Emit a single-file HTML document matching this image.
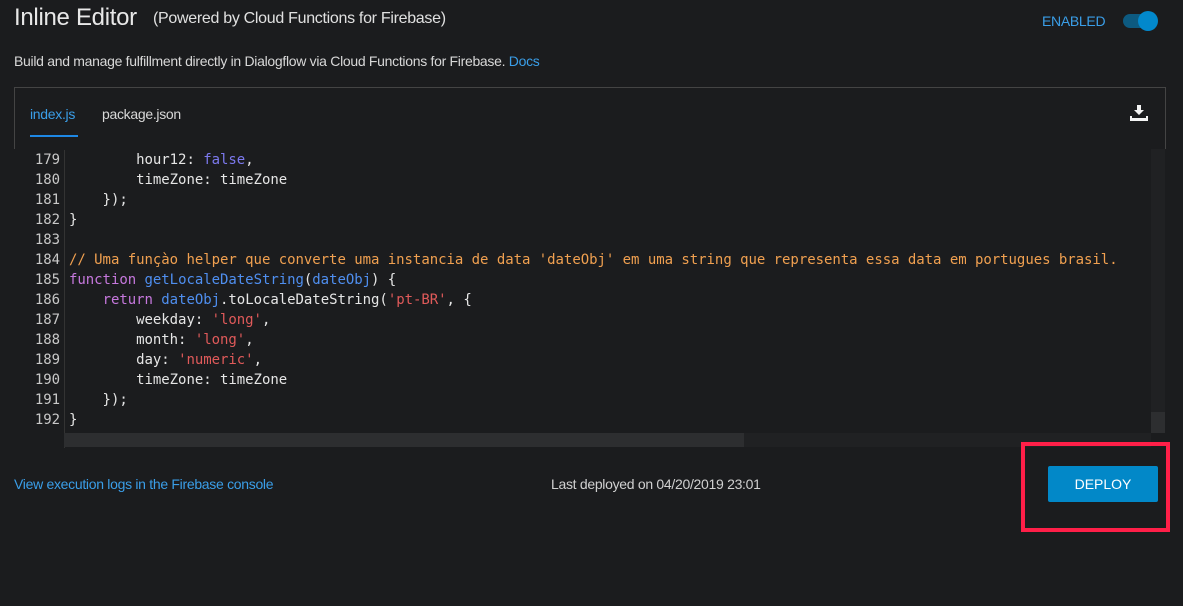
<!DOCTYPE html>
<html><head><meta charset="utf-8"><style>
*{margin:0;padding:0;box-sizing:border-box}
body{width:1183px;height:606px;background:#1b1c1e;font-family:"Liberation Sans",sans-serif;color:#ddd;position:relative;overflow:hidden}
.a{position:absolute;white-space:nowrap}
.n{letter-spacing:-0.3px}
.code{position:absolute;left:14px;top:150px;width:1151px;height:283px;font-family:"DejaVu Sans Mono",monospace;font-size:14px;line-height:20px;color:#e6e6e6;letter-spacing:-0.04px}
.ln{position:absolute;left:0;width:46px;text-align:right;color:#c8c8c8}
.tx{position:absolute;left:55px;white-space:pre}
.k{color:#c678dd}.f{color:#4f8ff0}.s{color:#e05a5a}.c{color:#f0a050}.b{color:#7c79ee}
</style></head><body>
<div class="a n" style="left:14px;top:4px;font-size:24px;color:#e8e8e8">Inline Editor</div>
<div class="a n" style="left:153px;top:10px;font-size:16px;color:#e0e0e0">(Powered by Cloud Functions for Firebase)</div>
<div class="a n" style="left:1042px;top:13px;font-size:14px;color:#3a9ee8">ENABLED</div>
<div class="a" style="left:1123px;top:14px;width:34px;height:14px;border-radius:7px;background:#0d5a80"></div>
<div class="a" style="left:1138px;top:11px;width:20px;height:20px;border-radius:10px;background:#0288cc"></div>
<div class="a n" style="left:14px;top:53px;font-size:14px;color:#d8d8d8">Build and manage fulfillment directly in Dialogflow via Cloud Functions for Firebase. <span style="color:#3a9ee8">Docs</span></div>
<div class="a" style="left:14px;top:87px;width:1152px;height:62px;border:1px solid #444;border-bottom:none"></div>
<div class="a n" style="left:30px;top:106px;font-size:14px;color:#3a9ee8">index.js</div>
<div class="a" style="left:30px;top:135px;width:48px;height:2px;background:#1e88e5"></div>
<div class="a n" style="left:102px;top:106px;font-size:14px;color:#d8d8d8">package.json</div>
<svg class="a" style="left:1130px;top:105px" width="18" height="16" viewBox="0 0 18 16"><path d="M7 0h4v5h3l-5 5-5-5h3z" fill="#f4f4f4"/><path d="M0 11h2v2h14v-2h2v5H0z" fill="#f4f4f4"/></svg>
<div class="code">
<div class="a" style="left:50px;top:0;width:1px;height:298px;background:#333"></div>
<div class="ln" style="top:0">179</div><div class="tx" style="top:0">        hour12: <span class="b">false</span>,</div>
<div class="ln" style="top:20px">180</div><div class="tx" style="top:20px">        timeZone: timeZone</div>
<div class="ln" style="top:40px">181</div><div class="tx" style="top:40px">    });</div>
<div class="ln" style="top:60px">182</div><div class="tx" style="top:60px">}</div>
<div class="ln" style="top:80px">183</div><div class="tx" style="top:80px"></div>
<div class="ln" style="top:100px">184</div><div class="tx c" style="top:100px">// Uma funçào helper que converte uma instancia de data 'dateObj' em uma string que representa essa data em portugues brasil.</div>
<div class="ln" style="top:120px">185</div><div class="tx" style="top:120px"><span class="k">function</span> <span class="f">getLocaleDateString</span>(<span class="f">dateObj</span>) {</div>
<div class="ln" style="top:140px">186</div><div class="tx" style="top:140px">    <span class="k">return</span> <span class="f">dateObj</span>.toLocaleDateString(<span class="s">'pt-BR'</span>, {</div>
<div class="ln" style="top:160px">187</div><div class="tx" style="top:160px">        weekday: <span class="s">'long'</span>,</div>
<div class="ln" style="top:180px">188</div><div class="tx" style="top:180px">        month: <span class="s">'long'</span>,</div>
<div class="ln" style="top:200px">189</div><div class="tx" style="top:200px">        day: <span class="s">'numeric'</span>,</div>
<div class="ln" style="top:220px">190</div><div class="tx" style="top:220px">        timeZone: timeZone</div>
<div class="ln" style="top:240px">191</div><div class="tx" style="top:240px">    });</div>
<div class="ln" style="top:260px">192</div><div class="tx" style="top:260px">}</div>
</div>
<div class="a" style="left:64px;top:433px;width:1087px;height:14px;background:#202123"></div>
<div class="a" style="left:64px;top:433px;width:680px;height:14px;background:#2d2e30"></div>
<div class="a" style="left:1151px;top:149px;width:14px;height:284px;background:#202123"></div>
<div class="a" style="left:1151px;top:412px;width:14px;height:21px;background:#2d2e30"></div>
<div class="a n" style="left:14px;top:476px;font-size:14px;color:#3a9ee8">View execution logs in the Firebase console</div>
<div class="a n" style="left:551px;top:476px;font-size:14px;color:#d0d0d0">Last deployed on 04/20/2019 23:01</div>
<div class="a" style="left:1021px;top:442px;width:149px;height:90px;border:4px solid #ff1f48"></div>
<div class="a" style="left:1048px;top:466px;width:110px;height:36px;background:#0288c8;border-radius:2px;color:#fff;font-size:14px;text-align:center;line-height:36px">DEPLOY</div>
</body></html>
